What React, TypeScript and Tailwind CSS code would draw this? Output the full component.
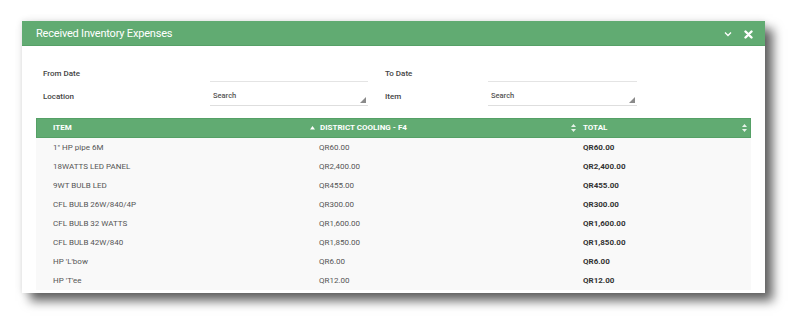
import React from 'react';

const rows = [
  { item: '1" HP pipe 6M', amount: 'QR60.00' },
  { item: '18WATTS LED PANEL', amount: 'QR2,400.00' },
  { item: '9WT BULB LED', amount: 'QR455.00' },
  { item: 'CFL BULB 26W/840/4P', amount: 'QR300.00' },
  { item: 'CFL BULB 32 WATTS', amount: 'QR1,600.00' },
  { item: 'CFL BULB 42W/840', amount: 'QR1,850.00' },
  { item: "HP 'L'bow", amount: 'QR6.00' },
  { item: "HP 'T'ee", amount: 'QR12.00' },
];

const SortBoth = () => (
  <svg width="5" height="8" viewBox="0 0 5 8" className="shrink-0">
    <path d="M2.5 0 L5 3 H0 Z" fill="#e8f3ea" />
    <path d="M2.5 8 L5 5 H0 Z" fill="#e8f3ea" />
  </svg>
);

const SortAsc = () => (
  <svg width="5" height="4" viewBox="0 0 5 4" className="shrink-0">
    <path d="M2.5 0 L5 3.5 H0 Z" fill="#ffffff" />
  </svg>
);

const Grip = () => (
  <svg width="6" height="6" viewBox="0 0 6 6" className="absolute right-[2px] bottom-[2px]">
    <path d="M6 0 V6 H0 Z" fill="#8a8a8a" />
  </svg>
);

const SearchBox = ({ w }: { w: string }) => (
  <div className={`relative ${w} h-[19px] border-b border-[#dedede] flex items-center pl-[3px] text-[7.5px] text-[#555]`}>
    Search
    <Grip />
  </div>
);

const App = () => {
  return (
    <div className="w-[807px] h-[335px] bg-white pt-[21px] pl-[22px] font-['Roboto',sans-serif]">
      <div className="w-[743px] h-[272px] bg-white overflow-hidden shadow-[8px_8px_10px_rgba(0,0,0,0.6),0_0_7px_rgba(0,0,0,0.12)]">
        {/* Header */}
        <div className="h-[25px] bg-[#61ab72] border-b border-[#56a067] flex items-center justify-between pl-[14px] pr-[12px] pt-[2px]">
          <span className="text-white text-[11px] tracking-[-0.2px]">Received Inventory Expenses</span>
          <div className="flex items-center gap-[12px]">
            <svg width="8" height="6" viewBox="0 0 8 6">
              <path d="M1 1.5 L4 4.5 L7 1.5" stroke="#fff" strokeWidth="1.3" fill="none" />
            </svg>
            <svg width="9" height="9" viewBox="0 0 9 9">
              <path d="M1.5 1.5 L7.5 7.5 M7.5 1.5 L1.5 7.5" stroke="#fff" strokeWidth="2.4" strokeLinecap="round" />
            </svg>
          </div>
        </div>

        {/* Filters */}
        <div className="pt-[18px] pl-[21px] text-[8px] font-medium text-[#444]">
          <div className="grid grid-cols-[167px_158px_17px_103px_149px] items-end">
            <div className="h-[18px] flex items-center pt-[2px]">From Date</div>
            <div className="h-[18px] border-b border-[#e4e4e4]"></div>
            <div></div>
            <div className="h-[18px] flex items-center pt-[2px]">To Date</div>
            <div className="h-[18px] border-b border-[#e4e4e4]"></div>
          </div>
          <div className="grid grid-cols-[167px_158px_17px_103px_149px] items-center mt-[5px]">
            <div>Location</div>
            <SearchBox w="w-[158px]" />
            <div></div>
            <div>Item</div>
            <SearchBox w="w-[149px]" />
          </div>
        </div>

        {/* Table */}
        <div className="mx-[14px] mt-[12px] text-[8px]">
          <div className="h-[20px] bg-[#61ab72] border border-[#55a066] flex items-center text-white font-bold uppercase">
            <div className="w-[279px] pl-[16px] pr-[1px] flex items-center justify-between">
              <span>Item</span>
              <SortAsc />
            </div>
            <div className="w-[263px] pl-[4px] pr-[3px] flex items-center justify-between">
              <span>District Cooling - F4</span>
              <SortBoth />
            </div>
            <div className="flex-1 pl-[4px] pr-[3px] flex items-center justify-between">
              <span>Total</span>
              <SortBoth />
            </div>
          </div>
          {rows.map((r, i) => (
            <div key={i} className="h-[19px] bg-[#f9f9f9] flex items-center text-[#555]">
              <div className="w-[279px] pl-[17px]">{r.item}</div>
              <div className="w-[263px] pl-[4px]">{r.amount}</div>
              <div className="flex-1 pl-[5px] font-bold text-[#333]">{r.amount}</div>
            </div>
          ))}
        </div>
      </div>
    </div>
  );
};

export default App;
